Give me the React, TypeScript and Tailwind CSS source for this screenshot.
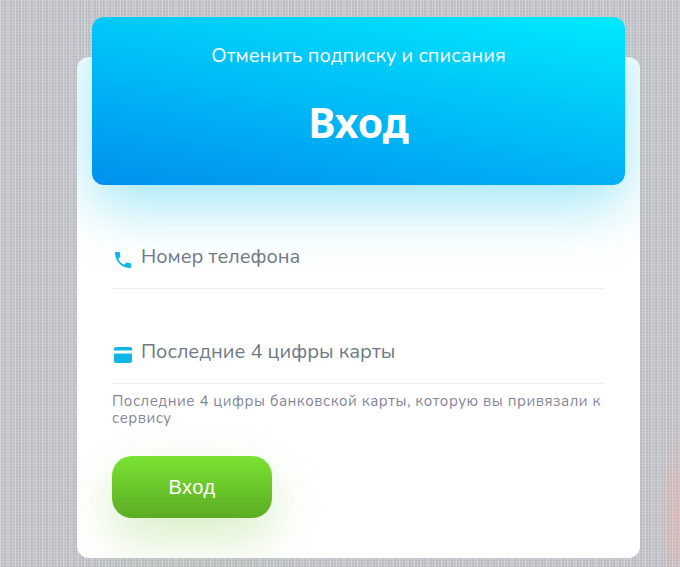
function CardIcon() {
  return (
    <svg viewBox="0 0 18 16" className="h-4 w-[18px] shrink-0" fill="#0fb5e6">
      <path d="M2 0h14a2 2 0 0 1 2 2v1.500H0V2a2 2 0 0 1 2-2z" />
      <path d="M0 6.500h18V14a2 2 0 0 1-2 2H2a2 2 0 0 1-2-2z" />
    </svg>
  );
}

function PhoneIcon() {
  return (
    <svg viewBox="3 3 18 18" className="ml-px h-[16px] w-[16px] shrink-0" fill="#0fb5e6">
      <path d="M6.620 10.790c1.440 2.830 3.760 5.140 6.590 6.590l2.200-2.200c.270-.270.670-.360 1.020-.240 1.120.370 2.330.570 3.570.570.550 0 1 .450 1 1V20c0 .550-.450 1-1 1-9.390 0-17-7.610-17-17 0-.550.450-1 1-1h3.500c.550 0 1 .450 1 1 0 1.250.200 2.450.570 3.570.110.350.030.740-.250 1.020l-2.200 2.200z" />
    </svg>
  );
}

function Field({ icon, label }: { icon: React.ReactNode; label: string }) {
  return (
    <div className="flex h-[48px] items-center border-b border-[#eeeeee] pb-[16px]">
      <div className="flex w-[29px] justify-start pl-[2px] pt-[6px]">{icon}</div>
      <span className="text-[20px] leading-[32px] text-[#6d7a85]">{label}</span>
    </div>
  );
}

export default function App() {
  return (
    <div className="relative h-[567px] w-[680px] overflow-hidden bg-[#c0c3c8] bg-[linear-gradient(90deg,rgba(255,255,255,0.2)_1px,transparent_1px),linear-gradient(90deg,rgba(255,255,255,0.14)_2px,transparent_2px),linear-gradient(0deg,rgba(0,0,0,0.05)_1px,transparent_1px)] bg-[length:3px_3px,7px_7px,3px_3px] pt-[57px] pl-[77px] font-['Nunito','Noto_Sans',sans-serif]">
      <div className="absolute right-0 top-[420px] h-[190px] w-[24px] bg-[radial-gradient(ellipse_at_right,rgba(255,170,160,0.4),transparent_70%)]" />
      <div className="relative h-[501px] w-[563px] rounded-[12px] bg-white px-[35px] flow-root">
        {/* header glow stays inside the white card */}
        <div className="absolute inset-0 overflow-hidden rounded-[12px]">
          <div className="ml-[15px] mt-[-40px] h-[168px] w-[533px] rounded-[12px] shadow-[0_20px_60px_rgba(0,188,230,0.38)]" />
        </div>
        <div className="relative -mx-[20px] -mt-[40px] flex h-[168px] flex-col items-center rounded-[12px] bg-[linear-gradient(190deg,#00eaff,#0090ee)] pt-[26px] text-white">
          <p className="text-[20px] leading-[26px]">Отменить подписку и списания</p>
          <h1 className="mt-[27px] font-['Noto_Sans',sans-serif] text-[41px] font-bold leading-[52px]">Вход</h1>
        </div>
        <div className="relative mt-[56px]">
          <Field icon={<PhoneIcon />} label="Номер телефона" />
        </div>
        <div className="relative mt-[47px]">
          <Field icon={<CardIcon />} label="Последние 4 цифры карты" />
        </div>
        <p className="relative mt-[9px] text-[15px] leading-[17px] tracking-[0.53px] text-[#85869a]">
          Последние 4 цифры банковской карты, которую вы привязали к сервису
        </p>
        <button
          type="button"
          className="relative mt-[29px] h-[62px] w-[160px] rounded-[20px] bg-[linear-gradient(180deg,#7ae332,#5cab24)] font-['Liberation_Sans',sans-serif] text-[20px] tracking-[0.5px] text-white shadow-[0_20px_50px_rgba(120,200,60,0.3)]"
        >
          Вход
        </button>
      </div>
    </div>
  );
}
